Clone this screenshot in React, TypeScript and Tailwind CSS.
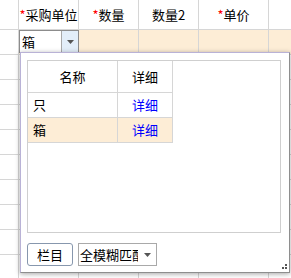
import React from 'react';

const cols = ['w-[19px]', 'w-[60px]', 'w-[60px]', 'w-[60px]', 'w-[70px]', 'flex-1'];

const Caret = () => (
  <svg width="7" height="4" viewBox="0 0 7 4" aria-hidden="true">
    <path d="M0 0h7L3.5 4z" fill="#555" />
  </svg>
);

const Req = () => <span className="text-[#ff0000]">*</span>;

export default function App() {
  const bodyRows = Array.from({ length: 10 }, (_, i) => i);

  return (
    <div
      className="relative w-[291px] h-[278px] overflow-hidden bg-white text-[13px] text-black"
      style={{ fontFamily: '"Noto Sans CJK SC", "Noto Sans", sans-serif' }}
    >
      {/* header */}
      <div className="flex h-[30px] border-b border-[#d6d6d6]">
        <div className={`${cols[0]} border-r border-[#d6d6d6]`} />
        <div className={`${cols[1]} border-r border-[#d6d6d6] flex items-center justify-center`}>
          <Req />采购单位
        </div>
        <div className={`${cols[2]} border-r border-[#d6d6d6] flex items-center justify-center`}>
          <Req />数量
        </div>
        <div className={`${cols[3]} border-r border-[#d6d6d6] flex items-center justify-center`}>数量2</div>
        <div className={`${cols[4]} border-r border-[#d6d6d6] flex items-center justify-center`}>
          <Req />单价
        </div>
        <div className={cols[5]} />
      </div>

      {/* body rows */}
      {bodyRows.map((i) => (
        <div
          key={i}
          className={`flex h-[25px] border-b border-[#d6d6d6] ${i === 0 ? 'bg-[#fdedd6]' : ''}`}
        >
          <div className={`${cols[0]} border-r border-[#d6d6d6] bg-white`} />
          {i === 0 ? (
            <div className={`${cols[1]} h-[23px] flex border border-[#8c8c8c] bg-white`}>
              <div className="flex-1 flex items-center pl-[2px] leading-none">箱</div>
              <div className="w-[17px] flex items-center justify-center bg-[#e3eef9] border-l border-[#a9a9a9]">
                <Caret />
              </div>
            </div>
          ) : (
            <div className={`${cols[1]} border-r border-[#d6d6d6]`} />
          )}
          <div className={`${cols[2]} border-r border-[#d6d6d6]`} />
          <div className={`${cols[3]} border-r border-[#d6d6d6]`} />
          <div className={`${cols[4]} border-r border-[#d6d6d6]`} />
          <div className={cols[5]} />
        </div>
      ))}

      {/* dropdown panel */}
      <div className="absolute left-[20px] top-[52px] w-[270px] h-[221px] bg-white border border-[#b9b2d6] border-r-[#8e8e8e] border-b-[#8e8e8e] shadow-[0_1px_5px_rgba(0,0,0,0.35)] flex flex-col pl-[6px] pr-[8px] pt-[7px]">
        <div className="h-[173px] border border-[#cfcfcf]">
          <div className="w-[145px]">
            <div className="flex h-[32px] border-b border-[#d6d6d6]">
              <div className="w-[90px] border-r border-[#d6d6d6] flex items-center justify-center">名称</div>
              <div className="w-[55px] border-r border-[#d6d6d6] flex items-center justify-center">详细</div>
            </div>
            {['只', '箱'].map((u, i) => (
              <div
                key={u}
                className={`flex h-[25px] border-b border-[#d6d6d6] ${i === 1 ? 'bg-[#fdedd6]' : ''}`}
              >
                <div className="w-[90px] border-r border-[#d6d6d6] flex items-center pl-[5px]">{u}</div>
                <div className="w-[55px] border-r border-[#d6d6d6] flex items-center justify-center text-[#0000ff]">
                  详细
                </div>
              </div>
            ))}
          </div>
        </div>

        <div className="flex items-center gap-[5px] mt-[10px]">
          <button className="w-[46px] h-[23px] rounded-[3px] border border-[#8797ad] bg-white flex items-center justify-center">
            栏目
          </button>
          <div className="w-[79px] h-[23px] border border-[#a9a9a9] flex items-center">
            <div className="w-[59px] overflow-hidden whitespace-nowrap pl-[1px]">全模糊匹配</div>
            <div className="flex-1 flex items-center justify-center">
              <Caret />
            </div>
          </div>
        </div>

        {/* resize grip */}
        <div className="absolute right-[2px] bottom-[3px] grid grid-cols-2 gap-[1px]">
          <span className="w-[2px] h-[2px]" />
          <span className="w-[2px] h-[2px] bg-[#555]" />
          <span className="w-[2px] h-[2px] bg-[#555]" />
          <span className="w-[2px] h-[2px] bg-[#555]" />
        </div>
      </div>
    </div>
  );
}
